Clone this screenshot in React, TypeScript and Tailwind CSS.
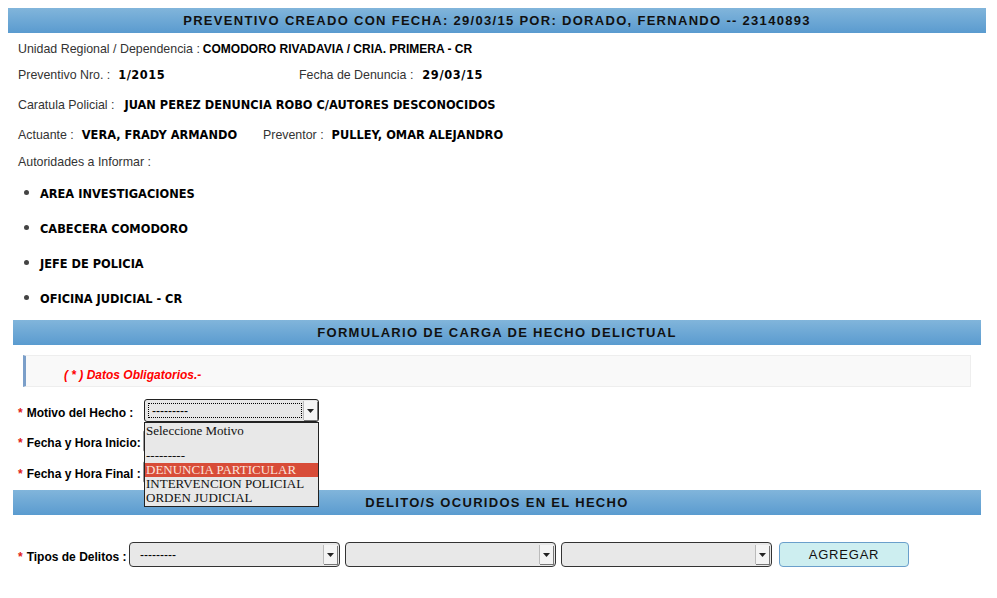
import React from "react";

const autoridades = [
  "AREA INVESTIGACIONES",
  "CABECERA COMODORO",
  "JEFE DE POLICIA",
  "OFICINA JUDICIAL - CR",
];

const motivos = ["DENUNCIA PARTICULAR", "INTERVENCION POLICIAL", "ORDEN JUDICIAL"];

const Bar = ({ title, className = "" }: { title: string; className?: string }) => (
  <div
    className={`h-[25px] flex items-center justify-center bg-gradient-to-b from-[#81b5db] to-[#5a9bcf] text-[13px] font-bold tracking-[1.3px] text-[#111] font-['Liberation_Sans',Arial,sans-serif] ${className}`}
  >
    {title}
  </div>
);

const Label = ({ children }: { children: React.ReactNode }) => (
  <span className="text-[12.4px] text-[#333] font-['Liberation_Sans',Arial,sans-serif]">{children}</span>
);

const Value = ({ children, className = "" }: { children: React.ReactNode; className?: string }) => (
  <span className={`text-[11.4px] font-bold text-black font-['DejaVu_Sans',Verdana,sans-serif] ${className}`}>
    {children}
  </span>
);

const Req = ({ children }: { children: React.ReactNode }) => (
  <span className="text-[12px] font-bold text-black font-['Liberation_Sans',Arial,sans-serif]">
    <span className="text-[#e0201a] mr-[4px]">*</span>
    {children}
  </span>
);

const Arrow = () => (
  <div className="w-[14px] self-stretch flex items-center justify-center bg-[#f4f4f4] border-l border-[#bbb] shadow-[1px_1px_0_#777]">
    <svg width="7" height="4" viewBox="0 0 7 4">
      <path d="M0 0h7L3.5 4z" fill="#222" />
    </svg>
  </div>
);

const FakeSelect = ({ text = "", className = "" }: { text?: string; className?: string }) => (
  <div
    className={`h-[25px] flex items-stretch rounded-[4px] border border-[#333] bg-[#e8e8e8] overflow-hidden ${className}`}
  >
    <div className="flex-1 flex items-center pl-[10px] text-[12px] text-black font-['Liberation_Sans',Arial,sans-serif]">
      {text}
    </div>
    <div className="py-[2px] pr-[2px] flex">
      <Arrow />
    </div>
  </div>
);

export default function App() {
  return (
    <div className="w-[997px] h-[598px] bg-white overflow-hidden relative">
      <div className="mx-2 mt-2 w-[978px]">
        <Bar title="PREVENTIVO CREADO CON FECHA: 29/03/15 POR: DORADO, FERNANDO -- 23140893" />

        <div className="pl-[10px]">
          <div className="h-[29px] flex items-baseline pt-[7px]">
            <Label>Unidad Regional / Dependencia :</Label>
            <span className="ml-[3px] text-[12px] font-bold text-black font-['Liberation_Sans',Arial,sans-serif]">
              COMODORO RIVADAVIA / CRIA. PRIMERA - CR
            </span>
          </div>
          <div className="h-[29px] flex items-baseline pt-[4px]">
            <div className="w-[281px] flex items-baseline">
              <Label>Preventivo Nro. :</Label>
              <Value className="ml-[8px] tracking-[0.5px]">1/2015</Value>
            </div>
            <Label>Fecha de Denuncia :</Label>
            <Value className="ml-[9px] tracking-[0.6px]">29/03/15</Value>
          </div>
          <div className="h-[30px] flex items-baseline pt-[5px]">
            <Label>Caratula Policial :</Label>
            <Value className="ml-[10px]">JUAN PEREZ DENUNCIA ROBO C/AUTORES DESCONOCIDOS</Value>
          </div>
          <div className="h-[27px] flex items-baseline pt-[5px]">
            <div className="w-[245px] flex items-baseline">
              <Label>Actuante :</Label>
              <Value className="ml-[8px]">VERA, FRADY ARMANDO</Value>
            </div>
            <Label>Preventor :</Label>
            <Value className="ml-[8px]">PULLEY, OMAR ALEJANDRO</Value>
          </div>
          <div className="h-[28px] flex items-center pt-[1px]">
            <Label>Autoridades a Informar :</Label>
          </div>
          <ul className="pt-[1px]">
            {autoridades.map((a) => (
              <li key={a} className="h-[35px] flex items-center">
                <span className="relative -top-[2px] w-[5px] h-[5px] rounded-full bg-[#444] ml-[6px] mr-[11px]" />
                <Value>{a}</Value>
              </li>
            ))}
          </ul>
        </div>
      </div>

      <div className="mx-[13px] mt-[3px] w-[968px]">
        <Bar title="FORMULARIO DE CARGA DE HECHO DELICTUAL" />

        <div className="mx-[10px] mt-[10px] h-[32px] bg-[#f9f9f9] border border-[#eee] border-l-[3px] border-l-[#7b9fc9] pl-[38px] pt-[10px] leading-[14px]">
          <span className="text-[12px] font-bold italic text-[#f00] font-['Liberation_Sans',Arial,sans-serif]">
            ( * ) Datos Obligatorios.-
          </span>
        </div>

        <div className="mt-[12px] pl-[5px] flex items-center h-[23px]">
          <div className="w-[126px]">
            <Req>Motivo del Hecho :</Req>
          </div>
          <div className="relative w-[175px] h-[23px]">
            <div className="h-full flex items-stretch rounded-[3px] border border-[#222] bg-[#e6e6e6] overflow-hidden">
              <div className="flex-1 m-[3px] mr-[1px] border border-dotted border-black flex items-center pl-[3px] text-[12px] text-black font-['Liberation_Sans',Arial,sans-serif]">
                ---------
              </div>
              <div className="py-[1px] pr-[1px] flex">
                <Arrow />
              </div>
            </div>
            <div className="absolute left-0 top-[23px] z-10 w-[175px] bg-[#e8e8e8] border border-[#222] text-[13px] leading-[14px] text-[#111] font-['Liberation_Serif','Times_New_Roman',serif] pb-[1px]">
              <div className="h-[16px] pl-[1px] pt-[1px]">Seleccione Motivo</div>
              <div className="h-[10px]" />
              <div className="h-[14px] pl-[1px]">---------</div>
              {motivos.map((m, i) => (
                <div
                  key={m}
                  className={`h-[14px] pl-[1px] whitespace-nowrap ${i === 0 ? "bg-[#d84c38] text-[#fbe3dc]" : ""}`}
                >
                  {m}
                </div>
              ))}
            </div>
          </div>
        </div>

        <div className="mt-[7px] pl-[5px] flex items-center h-[23px]">
          <div className="w-[125px]">
            <Req>Fecha y Hora Inicio:</Req>
          </div>
          <div className="w-[170px] h-[22px] border border-[#999] rounded-[2px] bg-white" />
        </div>
        <div className="mt-[8px] pl-[5px] flex items-center h-[23px]">
          <div className="w-[125px]">
            <Req>Fecha y Hora Final :</Req>
          </div>
          <div className="w-[170px] h-[22px] border border-[#999] rounded-[2px] bg-white" />
        </div>

        <Bar title="DELITO/S OCURIDOS EN EL HECHO" className="mt-[7px] tracking-[0.7px]" />

        <div className="mt-[27px] pl-[5px] flex items-center">
          <div className="w-[111px]">
            <Req>Tipos de Delitos :</Req>
          </div>
          <FakeSelect text="---------" className="w-[211px]" />
          <FakeSelect className="w-[211px] ml-[5px]" />
          <FakeSelect className="w-[211px] ml-[5px]" />
          <button className="ml-[7px] w-[130px] h-[25px] rounded-[4px] border border-[#6a9fcb] bg-[#cdeef0] text-[13px] tracking-[0.8px] text-[#111] font-['Liberation_Sans',Arial,sans-serif]">
            AGREGAR
          </button>
        </div>
      </div>
    </div>
  );
}
